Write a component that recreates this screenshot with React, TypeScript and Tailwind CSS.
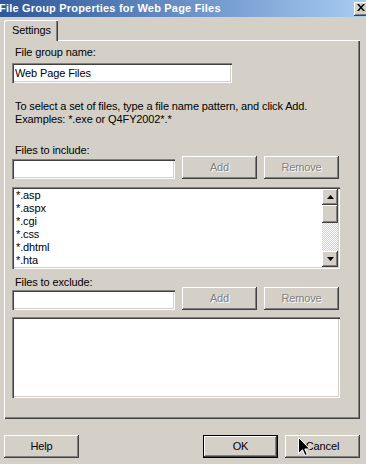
import React from "react";

const raised =
  "shadow-[inset_-1px_-1px_0_#404040,inset_1px_1px_0_#ffffff,inset_-2px_-2px_0_#808080,inset_2px_2px_0_#d4d0c8]";
const sunken =
  "shadow-[inset_1px_1px_0_#808080,inset_2px_2px_0_#404040,inset_-1px_-1px_0_#ffffff,inset_-2px_-2px_0_#d4d0c8]";

function DisabledButton({ label }: { label: string }) {
  return (
    <div
      className={`w-[75px] h-[23px] bg-[#d4d0c8] ${raised} flex items-center justify-center text-[#808080] [text-shadow:1px_1px_0_#ffffff]`}
    >
      {label}
    </div>
  );
}

function InputRow() {
  return (
    <div className="flex items-end">
      <div className={`w-[163px] h-[20px] bg-white ${sunken}`} />
      <div className="ml-[7px]">
        <DisabledButton label="Add" />
      </div>
      <div className="ml-[7px]">
        <DisabledButton label="Remove" />
      </div>
    </div>
  );
}

function Arrow({ up }: { up: boolean }) {
  return (
    <svg width="7" height="4" viewBox="0 0 7 4">
      {up ? (
        <path d="M3.5 0 L7 4 L0 4 Z" fill="#000" />
      ) : (
        <path d="M0 0 L7 0 L3.5 4 Z" fill="#000" />
      )}
    </svg>
  );
}

export default function App() {
  const items = ["*.asp", "*.aspx", "*.cgi", "*.css", "*.dhtml", "*.hta"];
  return (
    <div className="relative w-[366px] h-[464px] overflow-hidden bg-[#d4d0c8] font-['Liberation_Sans',Arial,sans-serif] text-[11px] leading-[13px] text-black tracking-[-0.12px]">
      {/* Title bar */}
      <div className="h-[17px] flex items-center bg-gradient-to-r from-[#2f5799] to-[#a8ccf2]">
        <span className="-ml-[1px] text-white font-bold text-[11px] tracking-[0.2px] whitespace-nowrap">
          File Group Properties for Web Page Files
        </span>
        <div
          className={`ml-auto -mr-[4px] self-start mt-[2px] w-[16px] h-[14px] bg-[#d4d0c8] ${raised} flex items-start justify-start pl-[3px] pt-[2px]`}
        >
          <svg width="8" height="7" viewBox="0 0 8 7">
            <path d="M0 0 L2 0 L4 2.5 L6 0 L8 0 L5 3.5 L8 7 L6 7 L4 4.5 L2 7 L0 7 L3 3.5 Z" fill="#000" />
          </svg>
        </div>
      </div>

      {/* Tab + panel */}
      <div className="pt-[3px] pl-[4px]">
        <div
          className={`relative z-10 w-[54px] h-[21px] -mb-[1px] bg-[#d4d0c8] rounded-tl-[2px] shadow-[inset_1px_1px_0_#ffffff,inset_-1px_0_0_#404040,inset_-2px_0_0_#808080] flex items-center pl-[8px] pb-[1px]`}
        >
          Settings
        </div>
        <div className="w-[356px] h-[379px] bg-[#d4d0c8] shadow-[inset_1px_1px_0_#ffffff,inset_-1px_-1px_0_#404040,inset_-2px_-2px_0_#808080] pl-[8px] pt-[6px] flex flex-col">
          <div className="pl-[3px]">File group name:</div>
          <div className={`mt-[4px] w-[220px] h-[20px] bg-white ${sunken} flex items-center pl-[3px] pt-[1px]`}>
            Web Page Files
          </div>
          <div className="mt-[17px] pl-[3px]">
            <div>To select a set of files, type a file name pattern, and click Add.</div>
            <div>Examples: *.exe or Q4FY2002*.*</div>
          </div>
          <div className="mt-[18px] pl-[3px]">Files to include:</div>
          <div className="-mt-[1px]">
            <InputRow />
          </div>
          <div className={`mt-[8px] w-[328px] h-[82px] bg-white ${sunken} flex p-[2px]`}>
            <div className="flex-1 flex flex-col pl-[2px] overflow-hidden">
              {items.map((it) => (
                <div key={it} className="h-[13px]">
                  {it}
                </div>
              ))}
            </div>
            <div className="w-[16px] flex flex-col">
              <div className={`h-[16px] bg-[#d4d0c8] ${raised} flex items-center justify-center`}>
                <Arrow up />
              </div>
              <div className={`h-[18px] bg-[#d4d0c8] ${raised}`} />
              <div className="flex-1 bg-[repeating-conic-gradient(#ffffff_0_25%,#d4d0c8_0_50%)] bg-[length:2px_2px]" />
              <div className={`h-[16px] bg-[#d4d0c8] ${raised} flex items-center justify-center`}>
                <Arrow up={false} />
              </div>
            </div>
          </div>
          <div className="mt-[7px] pl-[3px]">Files to exclude:</div>
          <div className="-mt-[2px]">
            <InputRow />
          </div>
          <div className={`mt-[7px] w-[328px] h-[81px] bg-white ${sunken}`} />
        </div>
      </div>

      {/* Bottom buttons */}
      <div className="mt-[16px] pl-[4px] pr-[6px] flex items-center">
        <div className={`w-[75px] h-[23px] bg-[#d4d0c8] ${raised} flex items-center justify-center`}>
          Help
        </div>
        <div className="ml-auto w-[75px] h-[23px] border border-black bg-[#d4d0c8] shadow-[inset_-1px_-1px_0_#404040,inset_1px_1px_0_#ffffff,inset_-2px_-2px_0_#808080] flex items-center justify-center">
          OK
        </div>
        <div className={`ml-[7px] w-[75px] h-[23px] bg-[#d4d0c8] ${raised} flex items-center justify-center`}>
          Cancel
        </div>
      </div>

      {/* Mouse cursor overlay */}
      <svg
        className="absolute left-[298px] top-[437px]"
        width="13"
        height="20"
        viewBox="0 0 13 20"
      >
        <path
          d="M0.5 0.5 L0.5 16.5 L4.5 12.8 L7 18.5 L9.3 17.5 L6.8 12 L11.8 12 Z"
          fill="#000"
          stroke="#fff"
          strokeWidth="1"
        />
      </svg>
    </div>
  );
}
